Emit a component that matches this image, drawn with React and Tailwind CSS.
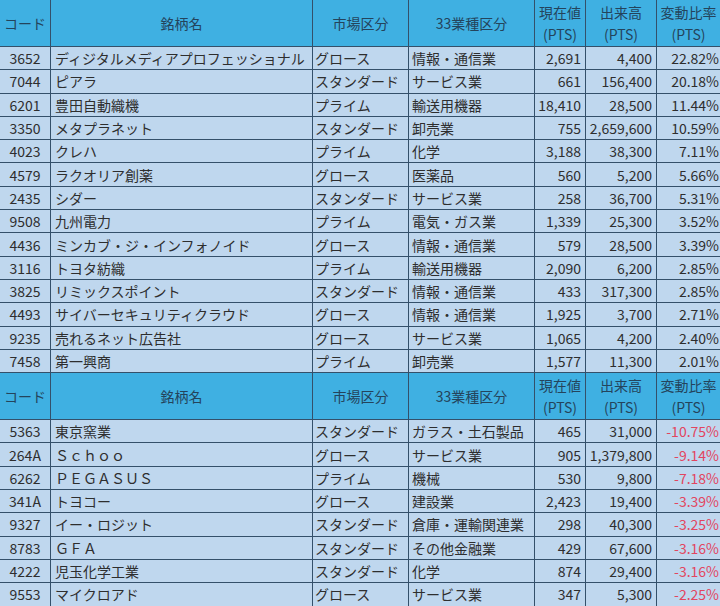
import React from 'react';

const top = [
  ['3652', 'ディジタルメディアプロフェッショナル', 'グロース', '情報・通信業', '2,691', '4,400', '22.82%'],
  ['7044', 'ピアラ', 'スタンダード', 'サービス業', '661', '156,400', '20.18%'],
  ['6201', '豊田自動織機', 'プライム', '輸送用機器', '18,410', '28,500', '11.44%'],
  ['3350', 'メタプラネット', 'スタンダード', '卸売業', '755', '2,659,600', '10.59%'],
  ['4023', 'クレハ', 'プライム', '化学', '3,188', '38,300', '7.11%'],
  ['4579', 'ラクオリア創薬', 'グロース', '医薬品', '560', '5,200', '5.66%'],
  ['2435', 'シダー', 'スタンダード', 'サービス業', '258', '36,700', '5.31%'],
  ['9508', '九州電力', 'プライム', '電気・ガス業', '1,339', '25,300', '3.52%'],
  ['4436', 'ミンカブ・ジ・インフォノイド', 'グロース', '情報・通信業', '579', '28,500', '3.39%'],
  ['3116', 'トヨタ紡織', 'プライム', '輸送用機器', '2,090', '6,200', '2.85%'],
  ['3825', 'リミックスポイント', 'スタンダード', '情報・通信業', '433', '317,300', '2.85%'],
  ['4493', 'サイバーセキュリティクラウド', 'グロース', '情報・通信業', '1,925', '3,700', '2.71%'],
  ['9235', '売れるネット広告社', 'グロース', 'サービス業', '1,065', '4,200', '2.40%'],
  ['7458', '第一興商', 'プライム', '卸売業', '1,577', '11,300', '2.01%'],
];

const bottom = [
  ['5363', '東京窯業', 'スタンダード', 'ガラス・土石製品', '465', '31,000', '-10.75%'],
  ['264A', 'Ｓｃｈｏｏ', 'グロース', 'サービス業', '905', '1,379,800', '-9.14%'],
  ['6262', 'ＰＥＧＡＳＵＳ', 'プライム', '機械', '530', '9,800', '-7.18%'],
  ['341A', 'トヨコー', 'グロース', '建設業', '2,423', '19,400', '-3.39%'],
  ['9327', 'イー・ロジット', 'スタンダード', '倉庫・運輸関連業', '298', '40,300', '-3.25%'],
  ['8783', 'ＧＦＡ', 'スタンダード', 'その他金融業', '429', '67,600', '-3.16%'],
  ['4222', '児玉化学工業', 'スタンダード', '化学', '874', '29,400', '-3.16%'],
  ['9553', 'マイクロアド', 'グロース', 'サービス業', '347', '5,300', '-2.25%'],
];

const grid = 'grid grid-cols-[51px_262px_96px_126px_51px_71px_63px]';
const cell = 'flex items-center border-r border-b border-[#34506a] whitespace-nowrap overflow-hidden';

function Header() {
  return (
    <div className={`${grid} h-[47px] bg-[#3fb0e2] text-[#24445c]`}>
      <div className={`${cell} justify-center`}>コード</div>
      <div className={`${cell} justify-center`}>銘柄名</div>
      <div className={`${cell} justify-center`}>市場区分</div>
      <div className={`${cell} justify-center`}>33業種区分</div>
      <div className={`${cell} flex-col justify-center leading-[22px]`}><span>現在値</span><span>(PTS)</span></div>
      <div className={`${cell} flex-col justify-center leading-[22px]`}><span>出来高</span><span>(PTS)</span></div>
      <div className={`${cell} flex-col justify-center leading-[22px] border-r-0`}><span>変動比率</span><span>(PTS)</span></div>
    </div>
  );
}

function Row({ r, neg }) {
  return (
    <div className={`${grid} h-[23.3px] bg-[#bfd7ee] text-[#2e2e2e]`}>
      <div className={`${cell} justify-center`}>{r[0]}</div>
      <div className={`${cell} pl-[4px]`}>{r[1]}</div>
      <div className={`${cell} pl-[2px]`}>{r[2]}</div>
      <div className={`${cell} pl-[3px]`}>{r[3]}</div>
      <div className={`${cell} justify-end pr-[4px]`}>{r[4]}</div>
      <div className={`${cell} justify-end pr-[4px]`}>{r[5]}</div>
      <div className={`${cell} justify-end pr-[1px] border-r-0 ${neg ? 'text-[#e2455f]' : ''}`}>{r[6]}</div>
    </div>
  );
}

export default function App() {
  return (
    <div className="w-[720px] h-[606px] overflow-hidden bg-[#bfd7ee] text-[14px] leading-none font-['Noto_Sans_CJK_JP',sans-serif]">
      <Header />
      {top.map((r) => <Row key={r[0]} r={r} />)}
      <Header />
      {bottom.map((r) => <Row key={r[0]} r={r} neg />)}
    </div>
  );
}
